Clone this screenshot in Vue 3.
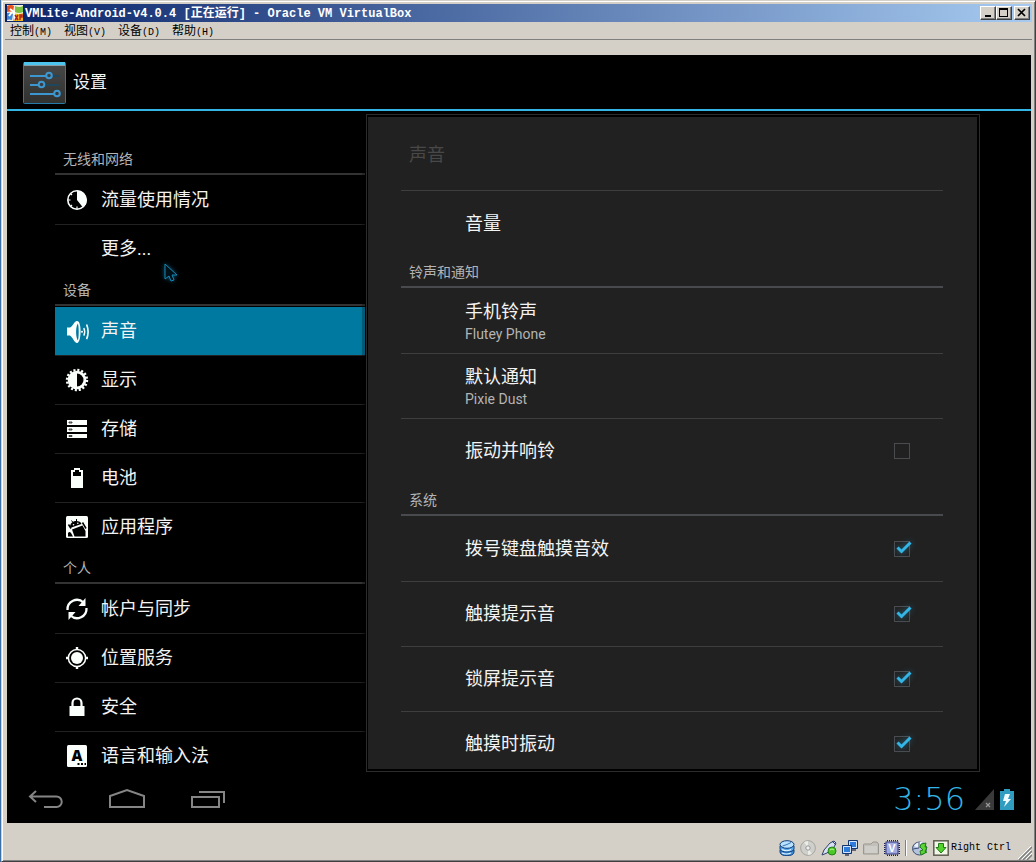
<script setup>
import { ref } from 'vue'

const menus = [
  { label: '控制', key: '(M)' },
  { label: '视图', key: '(V)' },
  { label: '设备', key: '(D)' },
  { label: '帮助', key: '(H)' },
]

const icons = {
  data:
    '<circle cx="12" cy="12" r="9.2" fill="none" stroke="#fafffc" stroke-width="1.6"/><path d="M12 2.5A9.5 9.5 0 0 1 18 19.4L12 12Z"/><path d="M3 12h2.5M12 21v-2.500M5.500 5.500l1.500 1.500M5.500 18.500l1.500-1.500" stroke="#fafffc" stroke-width="1.200"/>',
  sound:
    '<path d="M2 8.500h3c3-1 4-6.500 7-6.500 2.600 0 3.600 5 3.600 10S14.600 24 12 24s-4-5.500-7-7.500H2z"/><path d="M12.800 4.500c1.200 2 1.200 15 0 17-1.200-2-1.700-5-1.700-8.500s.5-6.500 1.700-8.500z" fill="#0079a1"/><circle cx="17" cy="12.800" r="1"/><path d="M18.800 9q1.800 3.800 0 7.600" fill="none" stroke="#fafffc" stroke-width="1.400"/><path d="M21.600 5.500q3 7.300 0 14.600" fill="none" stroke="#fafffc" stroke-width="1.600"/>',
  display:
    '<circle cx="12" cy="12" r="10" fill="none" stroke="#fafffc" stroke-width="2.400" stroke-dasharray="2.100 1.827"/><circle cx="12" cy="12" r="9.300"/><path d="M12 5.500a6.500 6.500 0 0 1 0 13z" fill="#000"/>',
  storage:
    '<path d="M2 3h20v5H2zM2 10h20v5H2zM2 17h20v4H2z"/><path d="M4 5h3v1H4zM4 12h3v1H4zM4 18.500h3v1H4z" stroke="#000" stroke-width=".7"/>',
  battery:
    '<path d="M6 4h3V2h6v2h3v18H6z"/><path d="M8 6h2V4h4v2h2v4H8z" fill="#000"/>',
  apps:
    '<rect x="1" y="1" width="22" height="22" rx="1.500"/><path d="M5 13C4.500 8.500 8 6 11 6s5 1 5.500 3z" fill="#000"/><path d="M8 7.500L6.500 5.500M11.500 6.500V4" stroke="#000"/><path d="M7 14.500l10.500-4L20.500 16v5.500H9.500z" fill="#000"/><path d="M3 18q1.500-2 3 0l2 3.500H3z" fill="#000"/><path d="M3.500 9.500l2.500 4M17.500 7.500l3.500 6" stroke="#000" stroke-width="1.500"/><circle cx="8.500" cy="9.800" r=".8"/><circle cx="12.800" cy="8.300" r=".8"/>',
  sync:
    '<path d="M2.500 13a9.500 9.500 0 0 1 16-7.500M21.500 11a9.500 9.500 0 0 1-16 7.500" fill="none" stroke="#fafffc" stroke-width="2.300"/><path d="M20.500 1v8h-7zM3.500 23v-8h7z"/>',
  location:
    '<circle cx="12" cy="12" r="8.600" fill="none" stroke="#fafffc" stroke-width="1.500"/><circle cx="12" cy="12" r="6"/><path d="M10.800 1h2.400v3h-2.400zM10.800 20h2.400v3h-2.400zM1 10.800h3v2.400H1zM20 10.800h3v2.400h-3z"/>',
  security:
    '<path d="M4.500 11h15v10h-15z"/><path d="M7.500 12V8a4.500 4.500 0 0 1 9 0v4" fill="none" stroke="#fafffc" stroke-width="2.200"/>',
  language:
    '<rect x="2" y="1" width="20" height="22" rx="1.500"/><text x="12" y="17" text-anchor="middle" font-family="Open Sans, sans-serif" font-weight="800" font-size="15" fill="#000">A</text><path d="M12.500 19h2v2h-2zM16 19h2v2h-2zM19.500 19h1.500v2h-1.500z" fill="#000"/>',
}

const groups = [
  {
    title: '无线和网络',
    items: [
      { label: '流量使用情况', icon: 'data' },
      { label: '更多...', icon: null },
    ],
  },
  {
    title: '设备',
    items: [
      { label: '声音', icon: 'sound', selected: true },
      { label: '显示', icon: 'display' },
      { label: '存储', icon: 'storage' },
      { label: '电池', icon: 'battery' },
      { label: '应用程序', icon: 'apps' },
    ],
  },
  {
    title: '个人',
    items: [
      { label: '帐户与同步', icon: 'sync' },
      { label: '位置服务', icon: 'location' },
      { label: '安全', icon: 'security' },
      { label: '语言和输入法', icon: 'language' },
    ],
  },
]

const vibrate = ref(false)
const system = ref([
  { id: 'dialpad', label: '拨号键盘触摸音效', on: true },
  { id: 'touch', label: '触摸提示音', on: true },
  { id: 'lock', label: '锁屏提示音', on: true },
  { id: 'haptic', label: '触摸时振动', on: true },
])
</script>

<template>
  <div class="window">
    <header class="titlebar">
      <svg class="app-icon" viewBox="0 0 16 16" aria-hidden="true">
        <rect width="16" height="16" fill="#f4f0e0" />
        <path d="M0 1q4-2 7 0l-1 6q-3-1-6 0z" fill="#e8501c" />
        <path d="M8 1q4 2 8 0v6q-4 2-8 0z" fill="#7cc142" />
        <path d="M0 8q3-1 6 1l-1 6q-3-1-5 0z" fill="#3d86d8" />
        <path d="M7 8q4 2 9 0v8H6z" fill="#f3b51e" />
        <path d="M3 4l4 3 1 8M5 7l-3 4" stroke="#fff" stroke-width="2" fill="none" />
        <path d="M8 10l3 5M11 10l-3 5M13 15v-5h2v2h-2" stroke="#b5221c" stroke-width="1.500" fill="none" />
      </svg>
      <h1>VMLite-Android-v4.0.4 [正在运行] - Oracle VM VirtualBox</h1>
      <div class="controls">
        <button type="button" aria-label="最小化">
          <svg viewBox="0 0 12 10"><path d="M3 7h6v2H3z" /></svg>
        </button>
        <button type="button" aria-label="最大化">
          <svg viewBox="0 0 12 10"><path d="M1 0h9v9H1zM2 2v6h7V2z" fill-rule="evenodd" /></svg>
        </button>
        <button type="button" class="close" aria-label="关闭">
          <svg viewBox="0 0 12 10"><path d="M2 1l7 7M9 1L2 8" stroke="#000" stroke-width="1.700" /></svg>
        </button>
      </div>
    </header>

    <nav class="menubar">
      <button v-for="m in menus" :key="m.key" type="button">{{ m.label }}<span>{{ m.key }}</span></button>
    </nav>

    <main class="screen">
      <header class="actionbar">
        <svg class="settings-icon" viewBox="0 0 43 42" aria-hidden="true">
          <defs>
            <linearGradient id="tile" x1="0" y1="0" x2="0" y2="1">
              <stop offset="0" stop-color="#484848" />
              <stop offset="1" stop-color="#30322f" />
            </linearGradient>
          </defs>
          <rect x=".5" y=".5" width="42" height="41" rx="1" fill="url(#tile)" stroke="#287aa8" />
          <path d="M1 0h41v3H1z" fill="#4cc4ee" />
          <path d="M1 3h41v1H1z" fill="#8a9ca4" />
          <g fill="none" stroke="#20465c" stroke-width="2">
            <path d="M29 14h8M21 23h16" />
          </g>
          <g fill="none" stroke="#3c96d0" stroke-width="2">
            <path d="M7 14h16M7 23h9M7 32h24" />
            <circle cx="26" cy="13.500" r="2.800" />
            <circle cx="18.500" cy="22.500" r="2.800" />
            <circle cx="34" cy="31.500" r="2.800" />
          </g>
        </svg>
        <h2>设置</h2>
      </header>

      <div class="body">
        <nav class="sidebar">
          <section v-for="g in groups" :key="g.title">
            <h3 class="group">{{ g.title }}</h3>
            <a
              v-for="item in g.items"
              :key="item.label"
              href="#"
              class="entry"
              :class="{ selected: item.selected }"
            >
              <svg viewBox="0 0 24 24" aria-hidden="true" v-html="item.icon ? icons[item.icon] : ''"></svg>
              <span>{{ item.label }}</span>
            </a>
          </section>
        </nav>

        <section class="frame">
          <div class="panel">
            <h2 class="panel-title">声音</h2>
            <button type="button" class="row"><span class="name">音量</span></button>
            <h3 class="group">铃声和通知</h3>
            <button type="button" class="row">
              <span class="name">手机铃声</span><span class="sub">Flutey Phone</span>
            </button>
            <button type="button" class="row">
              <span class="name">默认通知</span><span class="sub">Pixie Dust</span>
            </button>
            <label class="row check" for="vibrate">
              <span class="name">振动并响铃</span>
              <span class="box">
                <input id="vibrate" v-model="vibrate" type="checkbox" />
                <svg v-if="vibrate" viewBox="0 0 24 24"><path d="M7.500 10.500l4 4 9-9" /></svg>
              </span>
            </label>
            <h3 class="group">系统</h3>
            <label v-for="s in system" :key="s.id" class="row check" :for="s.id">
              <span class="name">{{ s.label }}</span>
              <span class="box">
                <input :id="s.id" v-model="s.on" type="checkbox" />
                <svg v-if="s.on" viewBox="0 0 24 24"><path d="M7.500 10.500l4 4 9-9" /></svg>
              </span>
            </label>
          </div>
        </section>
      </div>

      <footer class="navbar">
        <button type="button" aria-label="返回">
          <svg viewBox="0 0 36 22">
            <path d="M8 3L2 8.500 8 14M2 8.500h26.500a5 5 0 0 1 0 10.500H16" />
          </svg>
        </button>
        <button type="button" aria-label="主屏幕">
          <svg viewBox="0 0 36 22"><path d="M1 19V8l17-6 17 6v11z" /></svg>
        </button>
        <button type="button" aria-label="最近任务">
          <svg viewBox="0 0 36 22"><path d="M2 9h27v10H2zM9 4h25v11" /></svg>
        </button>
        <div class="tray">
          <time>3:56</time>
          <svg class="signal" viewBox="0 0 19 21" aria-hidden="true">
            <path d="M19 0v21H0z" fill="#3a3a3a" />
            <path d="M11 14l4 4M15 14l-4 4" stroke="#999" stroke-width="1.200" />
          </svg>
          <svg class="power" viewBox="0 0 14 21" aria-hidden="true">
            <path d="M0 2h4V0h6v2h4v19H0z" fill="#2f9cc0" />
            <path d="M5 5h5L8 10h3l-7 8 2-6H3z" fill="#f0faff" />
          </svg>
        </div>
      </footer>

      <svg class="pointer" viewBox="0 0 14 20" aria-hidden="true">
        <path d="M1 1v15l4-3 2 5 3-1-2-5h5z" />
      </svg>
    </main>

    <footer class="statusbar">
      <svg viewBox="0 0 16 16" aria-hidden="true">
        <g stroke="#123c78">
          <path d="M1 10v2c0 5 14 5 14 0v-2z" fill="#3f93de" />
          <path d="M1 6v3c0 4 14 4 14 0V6z" fill="#58aaf0" />
          <ellipse cx="8" cy="4.500" rx="7" ry="3.800" fill="#b8e2ff" />
        </g>
        <path d="M3 9.500q4 2.500 9 0M3 13q4 2 9 0" stroke="#e8f6ff" stroke-width="1.200" fill="none" />
        <path d="M8 4.500l4-2M8 4.500L3.500 6" stroke="#3a78b0" />
      </svg>
      <svg viewBox="0 0 16 16" aria-hidden="true">
        <circle cx="8" cy="8" r="7.400" fill="#cfcfcb" stroke="#a5a5a0" />
        <path d="M8 8L4 2l4-1zM8 8l4 6-4 1z" fill="#ecece8" />
        <circle cx="8" cy="8" r="2.200" fill="#eee" stroke="#999" />
      </svg>
      <svg viewBox="0 0 16 16" aria-hidden="true">
        <path d="M1 15l2-5 6-7 4-2 2 2-2 4-7 6z" fill="#d7e0f2" stroke="#31406a" />
        <path d="M11 1l4 4" stroke="#31406a" />
        <circle cx="11" cy="11" r="4" fill="#4cc828" stroke="#23811a" />
        <path d="M9 10q2-2 4 0" stroke="#b8f49c" fill="none" />
      </svg>
      <svg viewBox="0 0 16 16" aria-hidden="true">
        <path d="M6.500 .5h9v8h-9z" fill="#2f7cdc" stroke="#15356e" />
        <path d="M7.500 1.500h7v6h-7z" fill="none" stroke="#d5e8ff" />
        <path d="M10 9h4v2h-4z" fill="#667" />
        <path d="M.5 5.500h9v8h-9z" fill="#2f7cdc" stroke="#15356e" />
        <path d="M1.500 6.500h7v6h-7z" fill="none" stroke="#d5e8ff" />
        <path d="M3 14h4v2H3z" fill="#667" />
      </svg>
      <svg viewBox="0 0 16 16" aria-hidden="true">
        <path d="M.5 14V5q0-1 1-1H8l2-2h4l1.500 2v10z" fill="#c2c0ba" stroke="#99978f" />
        <path d="M2 6h12v7H2z" fill="#d0cec8" />
      </svg>
      <svg viewBox="0 0 16 16" aria-hidden="true">
        <path d="M3 .8h11M3 15.200h11M.8 3v11M15.200 3v11" stroke="#1a2058" stroke-width="1.600" stroke-dasharray="1 1" />
        <rect x="2" y="2" width="12" height="12" fill="#a2abe0" stroke="#30387c" />
        <text x="8" y="12" text-anchor="middle" font-family="Liberation Sans, sans-serif" font-weight="700" font-size="11" fill="#fff">V</text>
      </svg>
      <span class="divider"></span>
      <svg viewBox="0 0 16 16" aria-hidden="true">
        <ellipse cx="7.500" cy="8.500" rx="7" ry="6.500" fill="#b4c2dd" stroke="#3e4e74" />
        <path d="M2 6q4-5 9-4L7 8z" fill="#eef3ff" />
        <path d="M7 2v6M1 9l6-1" stroke="#3e4e74" />
        <path d="M9 4l5-1-1 4h2l-2 5h2l-6 3-1-4 3-1-3-3z" fill="#5bd434" stroke="#1e7c18" />
      </svg>
      <svg viewBox="0 0 16 16" aria-hidden="true">
        <rect x=".8" y=".8" width="14.400" height="14.400" fill="#f2f6e6" stroke="#5f5f50" stroke-width="1.500" />
        <path d="M5.500 3.500h5v4H13l-5 5.500-5-5.500h2.500z" fill="#54d22c" stroke="#1e7c18" />
      </svg>
      <span class="hostkey">Right Ctrl</span>
      <svg class="grip" viewBox="0 0 14 14" aria-hidden="true">
        <path d="M1 14L14 1M5 14l9-9M9 14l5-5" stroke="#808080" stroke-width="1.500" />
        <path d="M0 13L13 0M4 13l9-9M8 13l6-6" stroke="#fff" />
      </svg>
    </footer>
  </div>
</template>

<style>
body {
  margin: 0;
  background: #3a6ea5;
}
</style>

<style scoped>
* {
  box-sizing: border-box;
}
h1,
h2,
h3 {
  margin: 0;
  font-weight: 400;
}
button {
  margin: 0;
  padding: 0;
  border: 0;
  background: none;
  color: inherit;
  font: inherit;
  text-align: left;
}
svg {
  display: block;
  flex: none;
}
.window {
  display: flex;
  flex-direction: column;
  height: 100vh;
  margin-left: 1px;
  padding: 3px 3px 1px;
  border: 1px solid;
  border-color: #d4d0c8 #404040 #404040 #d4d0c8;
  background: #d4d0c8;
  box-shadow: inset 1px 1px #fff, inset -1px -1px #808080;
  font-family: 'Liberation Mono', 'Noto Sans CJK SC', monospace;
  font-size: 12px;
  color: #000;
}
.titlebar {
  display: flex;
  align-items: center;
  flex: none;
  height: 18px;
  padding: 0 2px;
  background: linear-gradient(to right, #0a246a, #a6caf0);
}
.app-icon {
  width: 16px;
  height: 16px;
}
.titlebar h1 {
  flex: 1;
  margin-left: 2px;
  padding-top: 2px;
  color: #fff;
  font-size: 12px;
  font-weight: 700;
  line-height: 16px;
  white-space: nowrap;
}
.controls {
  display: flex;
}
.controls button {
  width: 16px;
  height: 14px;
  padding: 1px;
  border: 1px solid;
  border-color: #fff #404040 #404040 #fff;
  background: #d4d0c8;
  box-shadow: inset -1px -1px #808080;
}
.controls .close {
  margin-left: 2px;
}
.controls svg {
  width: 12px;
  height: 10px;
}
.menubar {
  display: flex;
  gap: 12px;
  flex: none;
  height: 18px;
  padding: 2px 0 0 5px;
  border-bottom: 1px solid #808080;
  line-height: 16px;
}
.menubar span {
  font-size: 10px;
}
.screen {
  position: relative;
  display: flex;
  flex-direction: column;
  flex: 1;
  min-height: 0;
  margin: 15px 1px 0 2px;
  overflow: hidden;
  background: #000;
  color: #f3f3f3;
  font-family: Roboto, 'Noto Sans CJK SC', sans-serif;
  font-size: 18px;
}
.actionbar {
  display: flex;
  align-items: center;
  gap: 7px;
  flex: none;
  height: 56px;
  padding: 1px 0 0 16px;
  border-bottom: 2px solid #33b5e5;
}
.actionbar h2 {
  padding-bottom: 2px;
  font-size: 17px;
  line-height: 24px;
}
.settings-icon {
  width: 43px;
  height: 42px;
}
.body {
  display: flex;
  flex: 1;
  min-height: 0;
}
.sidebar {
  flex: 0 0 310px;
  margin-left: 48px;
  padding-top: 32px;
  overflow: hidden;
}
.group {
  height: 32px;
  margin-bottom: 1px;
  padding: 2px 8px 0;
  border-bottom: 2px solid #333;
  color: #b4b4b4;
  font-size: 14px;
  line-height: 28px;
}
.entry {
  display: flex;
  align-items: center;
  gap: 12px;
  height: 49px;
  padding-left: 10px;
  border-bottom: 1px solid #222;
  color: inherit;
  line-height: 24px;
  text-decoration: none;
}
.entry:last-child {
  border-color: transparent;
}
.entry.selected {
  background: #0079a1;
}
.entry svg {
  width: 24px;
  height: 24px;
  fill: #fafffc;
  overflow: visible;
}
.frame {
  flex: 1;
  min-width: 0;
  margin: 3px 51px 3px 1px;
  padding: 2px 2px 2px 1px;
  border: 1px solid #2c2c2c;
  background: #000;
  box-shadow: -1px 0 #000, -4px 0 rgba(0, 0, 0, 0.25);
}
.panel {
  height: 100%;
  padding: 0 34px 0 33px;
  overflow: hidden;
  background: #212121;
}
.panel-title {
  height: 74px;
  padding: 2px 8px 0;
  border-bottom: 1px solid #3e3e3e;
  color: #484848;
  font-size: 18px;
  line-height: 72px;
}
.panel .group {
  border-color: #484a4d;
}
.row {
  display: flex;
  flex-direction: column;
  justify-content: center;
  width: 100%;
  height: 65px;
  padding: 2px 0 0 64px;
  border-bottom: 1px solid #3e3e3e;
  line-height: 24px;
}
.row:has(+ .group) {
  border-color: transparent;
}
.sub {
  color: #b4b4b4;
  font-size: 14px;
  line-height: 20px;
}
.check {
  flex-direction: row;
  align-items: center;
  justify-content: space-between;
  padding: 0 29px 0 64px;
}
.box {
  display: grid;
  place-items: center;
  width: 24px;
  height: 24px;
}
.box > * {
  grid-area: 1 / 1;
}
.box input {
  appearance: none;
  width: 16px;
  height: 16px;
  margin: 0;
  border: 1px solid #4a4b4e;
}
.box svg {
  width: 24px;
  height: 24px;
  overflow: visible;
  pointer-events: none;
  fill: none;
  stroke: #33b5e5;
  stroke-width: 3;
  filter: drop-shadow(0 0 3px rgba(51, 181, 229, 0.5));
}
.navbar {
  display: flex;
  align-items: center;
  gap: 45px;
  flex: none;
  height: 48px;
  padding: 0 17px 0 21px;
}
.navbar button svg {
  width: 36px;
  height: 22px;
  fill: none;
  stroke: #858585;
  stroke-width: 2;
}
.tray {
  display: flex;
  align-items: center;
  margin-left: auto;
}
.tray time {
  margin-right: 10px;
  color: #33b5e5;
  font-family: 'DejaVu Sans', sans-serif;
  font-size: 32px;
  font-weight: 200;
  line-height: 48px;
}
.signal {
  width: 19px;
  height: 21px;
}
.power {
  width: 14px;
  height: 21px;
  margin-left: 6px;
}
.pointer {
  position: absolute;
  left: 157px;
  top: 208px;
  width: 14px;
  height: 20px;
  overflow: visible;
  fill: #001018;
  stroke: #1787b4;
  stroke-width: 1;
  filter: drop-shadow(0 0 2px #0a5878);
  pointer-events: none;
}
.statusbar {
  display: flex;
  align-items: center;
  justify-content: flex-end;
  gap: 5px;
  flex: none;
  height: 37px;
  padding-top: 13px;
}
.statusbar svg {
  width: 16px;
  height: 16px;
}
.divider {
  width: 2px;
  height: 16px;
  border-left: 1px solid #808080;
  background: #fff;
}
.hostkey {
  margin: 0 2px 0 -3px;
  font-size: 10px;
  line-height: 16px;
}
.statusbar .grip {
  align-self: flex-end;
  width: 14px;
  height: 14px;
}
</style>
